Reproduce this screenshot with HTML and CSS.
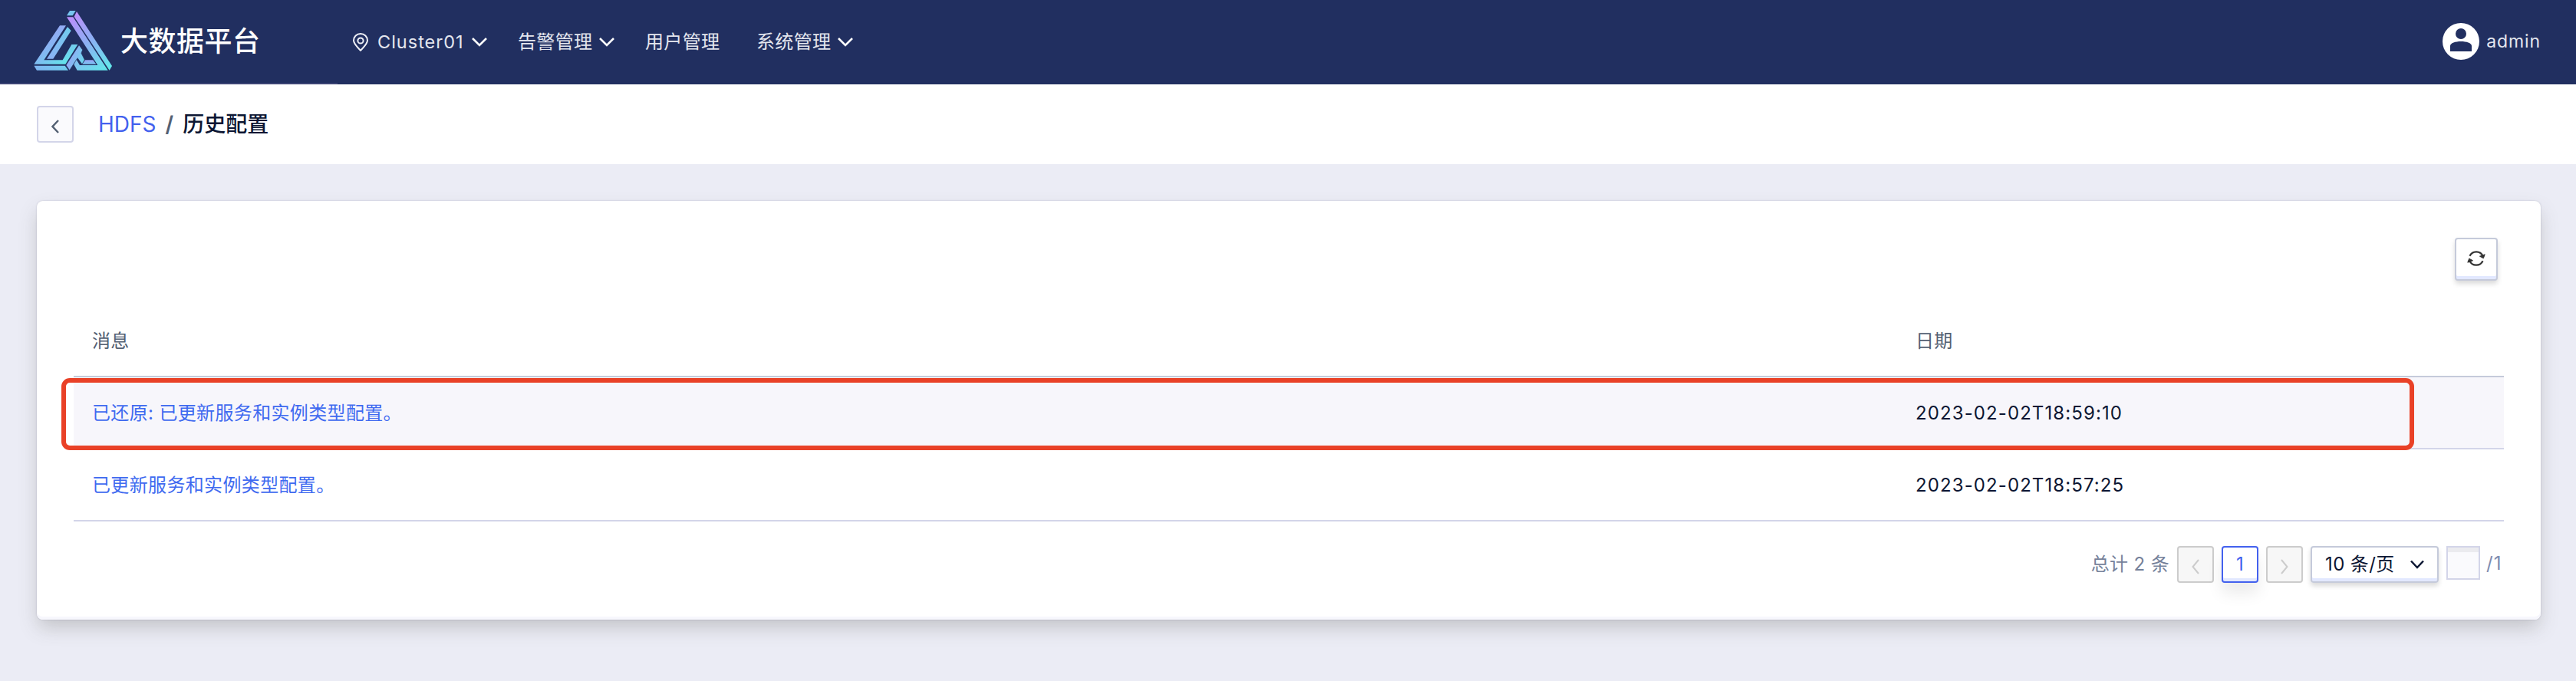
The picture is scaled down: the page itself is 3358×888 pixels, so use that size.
FILE: index.html
```html
<!DOCTYPE html>
<html lang="zh-CN">
<head>
<meta charset="utf-8">
<title>大数据平台</title>
<link rel="stylesheet" href="styles.css">
</head>
<body>
<header class="topbar">
  <div class="brand">
    <svg class="logo" width="102" height="78" viewBox="42 42 306 234">
      <defs>
        <linearGradient id="band" gradientUnits="userSpaceOnUse" x1="180" y1="65" x2="330" y2="275"><stop offset="0" stop-color="#bd8dfb"/><stop offset="0.45" stop-color="#8fadf4"/><stop offset="1" stop-color="#62e8ea"/></linearGradient>
        <linearGradient id="left" gradientUnits="userSpaceOnUse" x1="100" y1="110" x2="185" y2="235"><stop offset="0" stop-color="#9aa6f6"/><stop offset="0.5" stop-color="#82b8f2"/><stop offset="1" stop-color="#62e4ea"/></linearGradient>
        <linearGradient id="face" gradientUnits="userSpaceOnUse" x1="180" y1="110" x2="100" y2="230"><stop offset="0" stop-color="#72cdee"/><stop offset="1" stop-color="#8ab0f4"/></linearGradient>
        <linearGradient id="strip" x1="0" y1="0" x2="1" y2="0"><stop offset="0" stop-color="#80b6f2"/><stop offset="1" stop-color="#70cdee"/></linearGradient>
        <linearGradient id="mid" gradientUnits="userSpaceOnUse" x1="185" y1="220" x2="240" y2="240"><stop offset="0" stop-color="#90abf5"/><stop offset="1" stop-color="#6ad8ec"/></linearGradient>
        <linearGradient id="small" x1="0" y1="0" x2="0" y2="1"><stop offset="0" stop-color="#98a4f6"/><stop offset="1" stop-color="#78c4f0"/></linearGradient>
      </defs>
      <path fill="#76c4ee" d="M183 42H206L194 61H171Z"/>
      <path fill="url(#band)" d="M171 67H196L332 275H212L199 252L208 232L222 255H292Z"/>
      <path fill="url(#band)" d="M210 45L348 258L338 275L200 65Z"/>
      <path fill="url(#left)" d="M43 251L144 100H168L82 235H155L190 174H214L166 251Z"/>
      <path fill="url(#face)" d="M174 105L188 120L118 230H93Z"/>
      <path fill="url(#strip)" d="M43 257H164L177 275H54Z"/>
      <path fill="url(#mid)" stroke="#212f60" stroke-width="2" d="M219 176L233 195L228 208L241 234L231 251L213 227L182 275L168 255Z"/>
      <path fill="url(#small)" d="M243 235H274L286 251H232Z"/>
    </svg>
    <span class="brand-name">大数据平台</span>
  </div>
  <nav class="nav">
    <a class="nav-item cluster">
      <svg width="20" height="24" viewBox="0 0 20 24" fill="none" stroke="#eef0f7" stroke-width="2"><path d="M10 22.800C5 17.500 1 14 1 9.800A9 8.800 0 0 1 19 9.800C19 14 15 17.500 10 22.800Z"/><circle cx="10" cy="10" r="3.600"/></svg>
      <span class="en">Cluster01</span>
      <svg class="chev" width="20" height="14" viewBox="0 0 20 14"><path d="M1 2L10 11L19 2"/></svg>
    </a>
    <a class="nav-item alarm"><span>告警管理</span><svg class="chev" width="20" height="14" viewBox="0 0 20 14"><path d="M1 2L10 11L19 2"/></svg></a>
    <a class="nav-item users"><span>用户管理</span></a>
    <a class="nav-item system"><span>系统管理</span><svg class="chev" width="20" height="14" viewBox="0 0 20 14"><path d="M1 2L10 11L19 2"/></svg></a>
  </nav>
  <div class="account">
    <svg width="48" height="48" viewBox="0 0 48 48"><circle cx="24" cy="24" r="24" fill="#fff"/><circle cx="24" cy="14" r="7" fill="#212f60"/><path fill="#212f60" d="M10 37V30C10 26 17 24 24 24S38 26 38 30V37Z"/></svg>
    <span>admin</span>
  </div>
</header>
<div class="crumbs">
  <button class="back"><svg width="10" height="18" viewBox="0 0 10 18"><path d="M9 1L1.500 9L9 17"/></svg></button>
  <a class="crumb-link">HDFS</a><span class="sep">/</span><span class="crumb-here">历史配置</span>
</div>
<main class="card">
  <div class="toolbar">
    <button class="refresh"><svg width="24" height="22" viewBox="0 0 24 22"><g fill="none" stroke="#333" stroke-width="2.200"><path d="M3.500 7.800A9.400 9.400 0 0 1 20.600 7.800"/><path d="M20.500 14.200A9.400 9.400 0 0 1 3.400 14.200"/></g><path fill="#333" stroke="#333" stroke-linejoin="round" d="M16.500 8.200L23.200 5.800L21.300 10.800ZM7.500 13.800L0.800 16.200L2.700 11.200Z"/></svg></button>
  </div>
  <div class="table">
    <div class="row head"><span>消息</span><span>日期</span></div>
    <div class="row current"><a>已还原: 已更新服务和实例类型配置。</a><span class="date">2023-02-02T18:59:10</span><i class="highlight"></i></div>
    <div class="row"><a>已更新服务和实例类型配置。</a><span class="date">2023-02-02T18:57:25</span></div>
  </div>
  <div class="pager">
    <span class="total">总计 2 条</span>
    <button class="page off"><svg width="10" height="20" viewBox="0 0 10 20"><path d="M9 1L1.500 10L9 19"/></svg></button>
    <button class="page on">1</button>
    <button class="page off"><svg width="10" height="20" viewBox="0 0 10 20"><path d="M1 1L8.500 10L1 19"/></svg></button>
    <div class="size"><span>10 条/页</span><svg width="18" height="12" viewBox="0 0 18 12"><path d="M1 1.500L9 10L17 1.500"/></svg></div>
    <div class="jump"></div>
    <span class="pages">/1</span>
  </div>
</main>
</body>
</html>
```

FILE: styles.css
```css
* { box-sizing: border-box; }
body {
  margin: 0;
  height: 888px;
  overflow: hidden;
  background: #ebecf5;
  font-family: Inter, "Noto Sans CJK SC", sans-serif;
  font-size: 24px;
  letter-spacing: 0.35px;
  line-height: 32px;
  color: #0c1633;
}
button { padding: 0; font: inherit; letter-spacing: 0; }
svg { display: block; flex: none; }
.topbar { display: flex; height: 110px; background: #212f60; }
.brand {
  display: flex;
  width: 440px;
  padding: 14px 0 0 44px;
  border-bottom: 2px solid #3b4374;
}
.brand-name {
  margin: 15px 0 0 11px;
  font-size: 36px;
  font-weight: 500;
  line-height: 50px;
  letter-spacing: 0.5px;
  color: #fff;
}
.nav { display: flex; align-items: center; height: 110px; padding-left: 20px; color: #e4e6ee; }
.nav-item { display: flex; align-items: center; white-space: nowrap; }
.cluster { width: 215px; }
.cluster .en { width: 112px; margin: 0 11px 0 12px; font-size: 23.5px; letter-spacing: 1px; }
.alarm { width: 166px; }
.users { width: 145px; }
.nav-item .chev { margin-left: 9px; }
.cluster .chev { margin-left: 0; }
.chev path { fill: none; stroke: #fff; stroke-width: 2.6; }
.account {
  display: flex;
  align-items: center;
  gap: 9px;
  height: 108px;
  margin-left: auto;
  padding-right: 46px;
  color: #e4e6ee;
  font-size: 23px;
  letter-spacing: 0.9px;
}
.crumbs {
  display: flex;
  align-items: center;
  height: 104px;
  padding-left: 48px;
  background: #fff;
  font-size: 28px;
  letter-spacing: 0;
}
.back {
  display: grid;
  place-items: center;
  width: 48px;
  height: 48px;
  padding-top: 5px;
  border: 2px solid #d3d5e9;
  border-radius: 4px;
  background: #fafafd;
}
.back path { fill: none; stroke: #536073; stroke-width: 2.5; }
.crumb-link { margin-left: 32px; color: #4361ee; }
.sep { margin: 0 12px; font-weight: 600; color: #536073; }
.crumb-here { font-weight: 500; }
.card {
  height: 546px;
  margin: 48px 46px 0 48px;
  padding: 48px 48px 0;
  border-radius: 8px;
  background: #fff;
  box-shadow: inset 0 -4px #f7f7fd, 0 0 2px rgba(60, 60, 90, .25), 0 12px 24px -2px rgba(80, 80, 75, .26);
}
.toolbar { display: flex; justify-content: flex-end; padding-right: 8px; }
.refresh {
  display: grid;
  place-items: center;
  width: 56px;
  height: 56px;
  padding-bottom: 2px;
  border: 2px solid #c5cada;
  border-radius: 4px;
  background: #fff;
  box-shadow: inset 0 -4px #e2e8ff, 0 4px 6px rgba(0, 0, 0, .15);
}
.table { margin-top: 32px; }
.row {
  position: relative;
  display: grid;
  grid-template-columns: 2377px 1fr;
  align-items: center;
  height: 94px;
  padding: 2px 24px 0;
  border-bottom: 2px solid #d3d5e9;
}
.row a { color: #3f6af0; }
.date { letter-spacing: 1.1px; }
.head { border-color: #c5cada; color: #536073; }
.current { background: #f7f6fb; }
.highlight {
  position: absolute;
  left: -16px;
  top: 1px;
  width: 3067px;
  height: 94px;
  border: 6px solid #e94127;
  border-radius: 11px;
}
.pager { display: flex; height: 48px; margin-top: 32px; justify-content: flex-end; }
.total { margin: 8px 10px 0 0; color: #75819a; }
.page {
  display: grid;
  place-items: center;
  width: 48px;
  height: 48px;
  margin-right: 10px;
  border: 2px solid #ccc;
  border-radius: 4px;
  background: #f7f7f7;
}
.off { padding-top: 6px; }
.off path { fill: none; stroke: #ccc; stroke-width: 2; }
.on {
  border-color: #4361ee;
  background: #fff;
  color: #4361ee;
  box-shadow: inset 0 -4px #e2e8ff, 0 14px 20px rgba(0, 0, 0, .08);
}
.size {
  display: flex;
  align-items: center;
  justify-content: space-between;
  width: 167px;
  height: 48px;
  margin-right: 10px;
  padding: 0 17px;
  border: 2px solid #c5cada;
  border-radius: 4px;
  box-shadow: inset 0 -4px #e2e8ff, 0 4px 6px rgba(0, 0, 0, .15);
  letter-spacing: 0.4px;
}
.size path { fill: none; stroke: #0c1633; stroke-width: 2.5; }
.jump {
  width: 44px;
  height: 44px;
  border: 2px solid #d3d5e9;
  background: #fafafd;
  box-shadow: inset 0 6px #ebebef;
}
.pages { width: 23px; margin: 7px 0 0 8px; color: #7e8cb0; letter-spacing: 1px; }
```
